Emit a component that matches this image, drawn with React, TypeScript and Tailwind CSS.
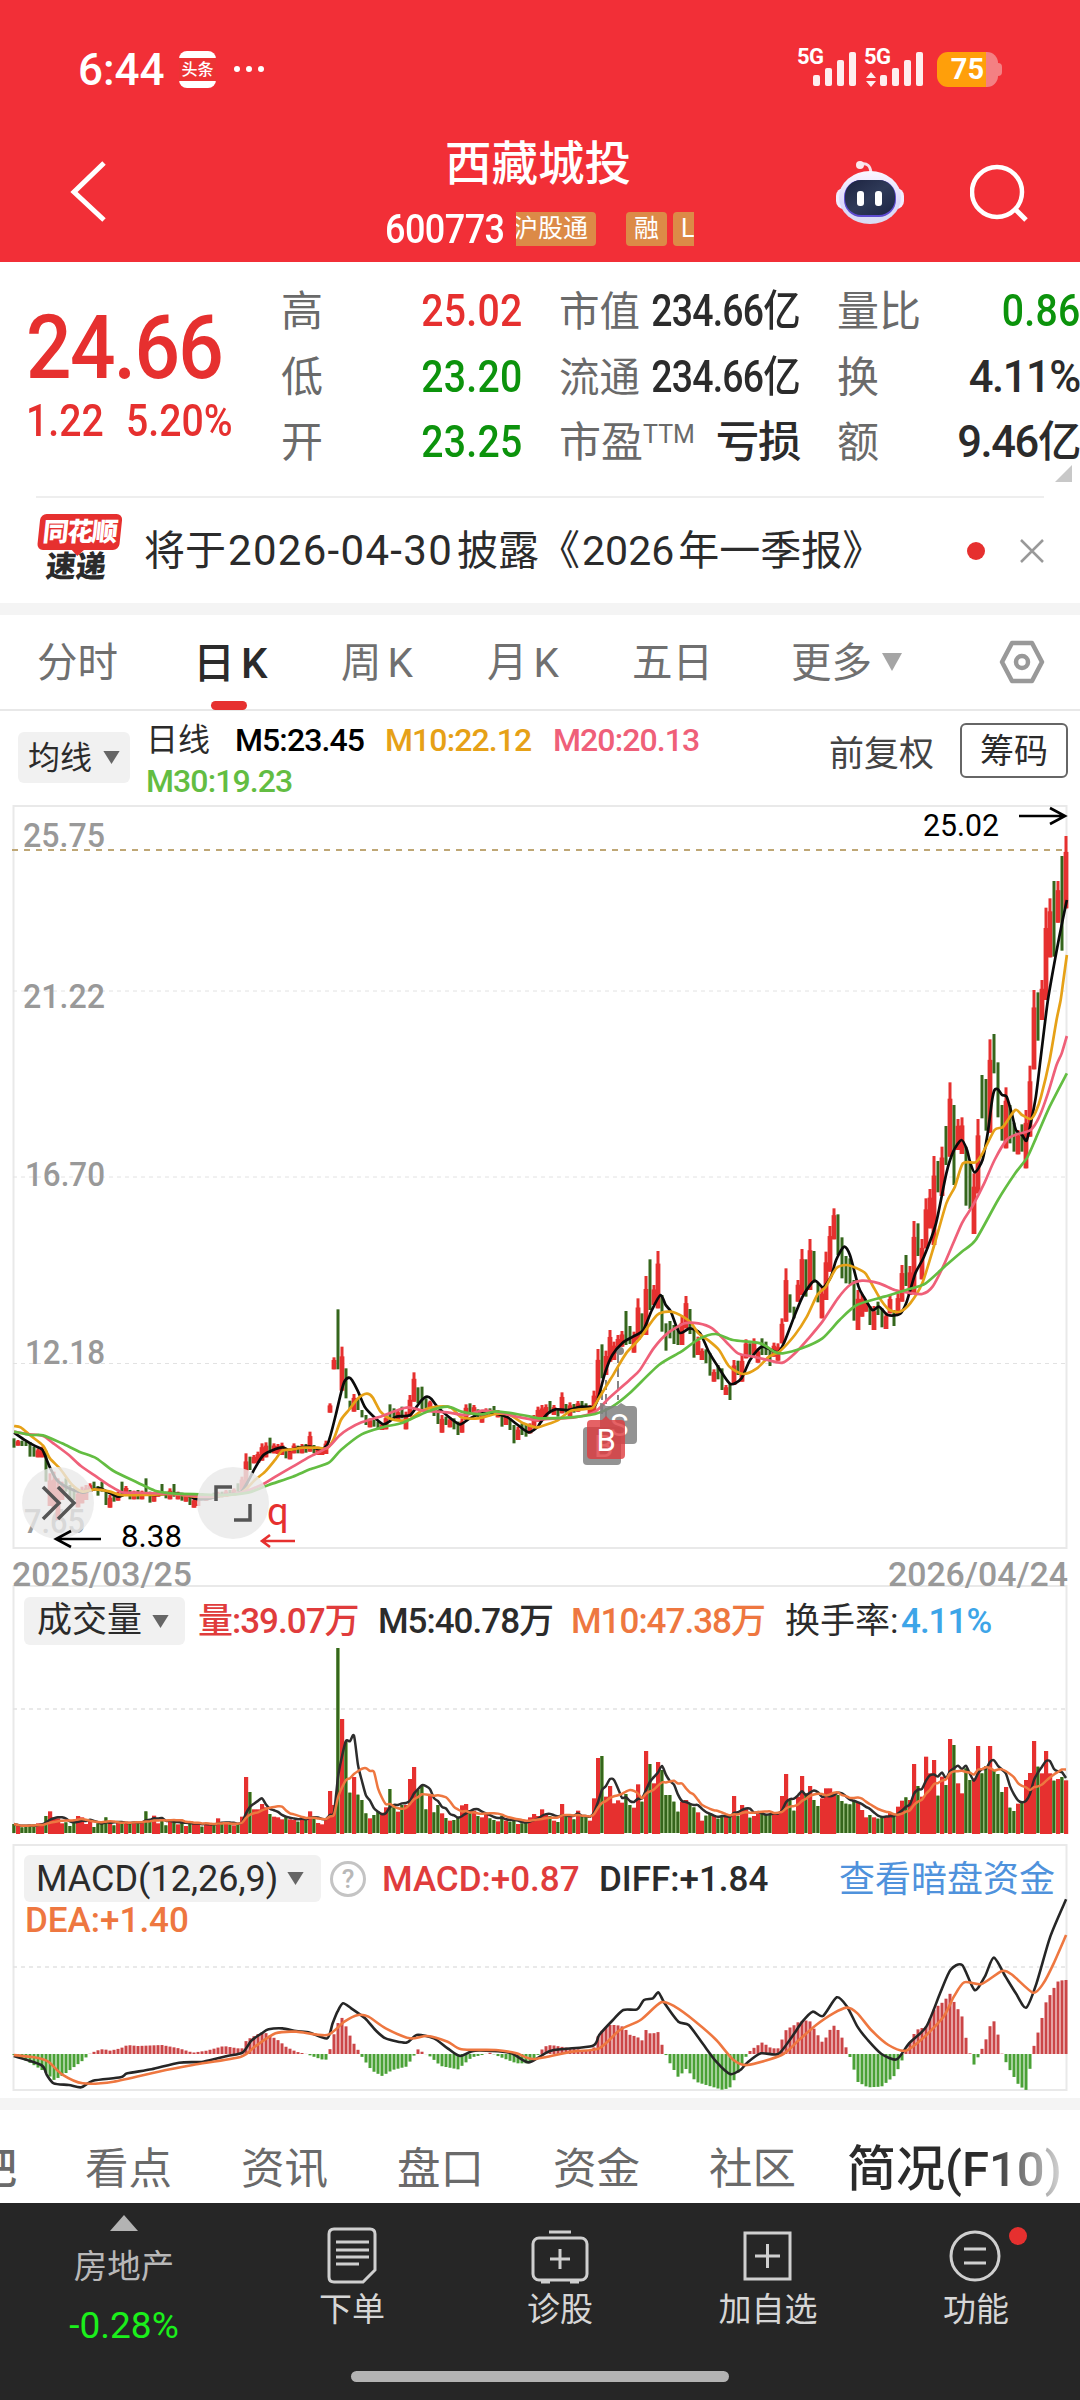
import type { ReactNode } from 'react';

const RED = '#e6302f';
const GREEN = '#35661c';
const GREEN_SOFT = '#8fb573';

// one letter per trading day: r = up, g = down
const directions = [
  'grggggrrgrrrrgggrrrrggggrgrgrgrgr',
  'ggrrggrgrgrgrrgrrgrgrgrgrrgrrrrgr',
  'rrgrrgrgrgrrrrrgrggrgggrggrrggrgr',
  'rrgggrggrgrggrrgrgrrggrgrggrggrrr',
  'rrgrgrgrgrggrrrgrrrrrggrrgrgrrggg',
  'ggrrggrrggrggrgrgrrgrrgggrrrrggrr',
  'grggrrrrgggggrrrgrggrrgrrgrrgrrrr',
  'grgrgrrggrrggrgggrggrgrrrgrrrgrgr',
].join('');

const volumeTops = [
  552, 558, 562, 556, 556, 554, 550, 550, 528, 514, 532, 535, 550, 547, 558, 545, 528, 532, 552, 540, 561, 550,
  552, 532, 545, 556, 545, 552, 545, 548, 548, 545, 548, 514, 540, 527, 550, 540, 556, 540, 542, 553, 548, 558,
  545, 550, 550, 560, 555, 550, 553, 535, 548, 550, 553, 556, 550, 530, 411, 456, 508, 508, 492, 502, 522, 530,
  532, 538, 528, 538, 540, 545, 532, 533, 514, 535, 549, 553, 535, 453, 495, 24, 237, 305, 458, 411, 464, 480,
  520, 535, 525, 515, 518, 502, 447, 492, 515, 495, 495, 417, 381, 450, 435, 508, 462, 517, 495, 520, 534, 542,
  540, 530, 496, 492, 510, 512, 528, 532, 520, 535, 540, 544, 527, 542, 545, 542, 552, 550, 546, 532, 522, 528,
  508, 522, 528, 542, 546, 492, 530, 530, 538, 512, 530, 530, 542, 475, 354, 348, 470, 438, 490, 481, 488, 462,
  495, 503, 433, 485, 333, 372, 430, 366, 390, 465, 465, 485, 515, 485, 480, 492, 502, 517, 542, 527, 520, 528,
  536, 530, 528, 530, 468, 528, 495, 505, 533, 528, 520, 515, 525, 525, 518, 520, 468, 402, 478, 512, 470, 408,
  460, 438, 480, 498, 475, 445, 445, 462, 465, 483, 491, 493, 480, 488, 510, 532, 525, 532, 536, 528, 528, 518,
  530, 500, 482, 472, 480, 372, 438, 470, 350, 400, 360, 467, 410, 435, 297, 315, 430, 460, 385, 420, 415, 318,
  400, 378, 318, 390, 402, 456, 441, 503, 513, 491, 485, 420, 399, 303, 380, 400, 333, 400, 422, 417, 411, 421,
];

// high / low pairs, in thirds of a pixel from the base of each stretch
const stretches: { base: number; pairs: number[] }[] = [
  {
    base: 1180,
    pairs: [
      775, 803, 780, 797, 782, 798, 785, 798, 786, 830, 800, 830, 805, 832, 800, 832, 812, 905, 880, 978, 875, 985,
      895, 1020, 905, 960, 895, 935, 915, 955, 925, 960, 930, 982, 920, 970, 915, 960, 910, 935, 905, 930, 918, 947,
      905, 935, 935, 975, 945, 983, 940, 965, 935, 962, 905, 950, 918, 945, 930, 958, 932, 958, 930, 958, 932, 958,
      895, 948, 935, 968, 938, 965, 932, 950, 912, 945, 935, 955, 925, 958, 912, 950, 935, 958, 938, 962, 940, 965,
      945, 975, 955, 983, 950, 978, 940, 960, 945, 962, 942, 958, 938, 955, 935, 952, 935, 952, 930, 950, 930, 948,
      925, 945, 910, 935, 890, 930, 820, 930, 830, 870, 825, 850, 815, 848, 790, 842, 787, 832, 773, 820, 790, 820,
      792, 822, 788, 825, 805, 835, 805, 838, 790, 820, 797, 820, 792, 820, 792, 818, 755, 815, 795, 820, 800, 825,
      805, 825, 782, 822, 670, 698, 532, 568, 388, 568, 500, 632, 565, 655, 662, 688, 642, 695, 655, 690, 690, 712,
      705, 735, 715, 742, 720, 740, 725, 748, 730, 750, 705, 748, 673, 720, 685, 712, 690, 720, 680, 715, 695, 748,
      645, 710, 577, 665, 622, 670, 620, 690, 655, 685, 662, 685, 680, 708, 690, 732, 705, 758, 710, 735, 712, 742,
      715, 748, 725, 765, 715, 758, 673, 720, 670, 700, 675, 705, 688, 712, 690, 728, 685, 708, 685, 705, 678, 705,
      690, 712, 705, 740, 700, 735, 715, 750, 735, 790, 740, 780, 730, 765, 735, 770, 730, 760, 705, 745, 680, 725,
    ],
  },
  {
    base: 1000,
    pairs: [
      1215, 1262, 1213, 1250, 1203, 1240, 1215, 1245, 1225, 1250, 1177, 1240, 1212, 1238, 1207, 1248, 1212, 1238,
      1203, 1235, 1203, 1230, 1210, 1228, 1215, 1240, 1172, 1240, 1047, 1195, 1033, 1135, 1052, 1125, 990, 1085,
      1025, 1080, 1005, 1060, 993, 1040, 933, 1035, 978, 1032, 995, 1058, 895, 1020, 940, 1005, 828, 1005, 778, 930,
      855, 915, 753, 925, 885, 995, 970, 1052, 963, 1015, 975, 1032, 980, 1035, 950, 1035, 888, 985, 927, 1002,
      985, 1073, 1010, 1065, 1045, 1080, 1048, 1090, 1060, 1127, 1108, 1145, 1095, 1138, 1105, 1170, 1155, 1185,
      1150, 1200, 1080, 1155, 1082, 1125, 1065, 1145, 1018, 1075, 1030, 1065, 1015, 1062, 1045, 1088, 1015, 1065,
      1025, 1065, 1050, 1098, 1028, 1070, 1030, 1082, 955, 1030, 805, 965, 883, 938, 920, 955, 840, 905, 747, 885,
      778, 890, 717, 870, 753, 848, 850, 907, 860, 955, 755, 900, 678, 815, 625, 718, 643, 765, 712, 835, 768, 850,
      775, 852, 840, 962, 870, 990, 882, 950, 900, 935, 918, 975, 918, 990, 905, 945, 925, 982, 938, 987, 885, 940,
      930, 978, 880, 945, 795, 905, 765, 858, 798, 885, 663, 880, 670, 768, 717, 838, 595, 745, 567, 685, 468, 735,
      483, 577, 440, 588, 378, 495, 247, 470, 315, 555, 357, 450, 352, 462, 440, 617, 485, 627, 520, 702, 357, 580,
      225, 355, 237, 392, 118, 398, 102, 220, 187, 352, 315, 422, 262, 445, 315, 430, 368, 455, 390, 463, 373, 455,
      330, 505, 197, 410,
    ],
  },
  { base: 800, pairs: [570, 808, 577, 722, 540, 660, 323, 600, 295, 472, 243, 470, 243, 368, 168, 452, 108, 325] },
];

const candles = stretches
  .flatMap(({ base, pairs }) => {
    const out: { high: number; low: number }[] = [];
    for (let i = 0; i < pairs.length; i += 2) out.push({ high: base + pairs[i] / 3, low: base + pairs[i + 1] / 3 });
    return out;
  })
  .map((c, i) => ({ ...c, x: 14 + i * 4, up: directions[i] !== 'g' }));

type Trace = { color: string; first: string; second: string };

const averages: Trace[] = [
  {
    color: '#0b0b0b',
    first:
      '41,758 75,782 100,797 122,808 130,825 145,862 165,900 200,925 240,938 260,932 290,925 320,940 345,950 370,940 420,943 450,945 500,940 540,945 570,957 600,957 650,945 690,940 705,930 725,895 740,865 765,825 800,807 822,802 840,810 870,803 900,800 930,808 950,795 960,765 975,705 990,640 1000,605 1013,593 1022,600 1040,635 1060,682 1090,715 1113,733 1130,725 1150,710 1190,706 1210,680 1225,660 1240,650 1253,657 1270,680 1300,708 1335,733 1360,718 1390,703 1420,698 1450,703 1475,712 1500,732 1535,757 1560,742',
    second:
      '0,1270 20,1243 45,1228 80,1230 120,1220 157,1220 170,1190 190,1115 210,1065 240,1028 270,1010 300,990 325,930 350,885 365,915 380,935 405,998 435,985 465,1000 490,1055 520,1105 553,1152 585,1135 610,1080 645,1040 690,1057 710,1025 740,945 765,885 797,842 822,862 845,830 860,780 883,740 900,765 925,860 940,890 965,930 985,920 1010,945 1045,942 1065,905 1090,820 1115,770 1150,670 1180,520 1200,455 1224,420 1240,450 1250,490 1263,517 1285,480 1300,400 1313,300 1320,270 1330,268 1342,285 1355,290 1370,340 1382,390 1400,405 1413,422 1425,370 1440,290 1455,165 1465,80 1475,0 1490,-90 1508,-190 1530,-300',
  },
  {
    color: '#e6a117',
    first:
      '41,738 60,742 90,768 125,797 145,835 175,867 210,915 240,935 275,928 320,935 350,945 420,945 500,942 570,950 620,950 700,938 740,900 770,875 800,838 820,812 850,808 880,803 920,803 950,805 970,775 990,720 1013,690 1040,655 1065,641 1082,652 1105,695 1130,715 1165,722 1190,718 1225,692 1270,680 1310,683 1340,712 1390,715 1440,702 1480,705 1520,730 1555,742',
    second:
      '0,1280 50,1262 90,1232 150,1225 165,1205 215,1120 250,1060 290,1015 340,945 380,935 415,950 440,970 460,1000 490,1022 520,1050 550,1100 590,1122 630,1105 665,1070 695,1055 740,1005 775,950 805,885 830,860 860,805 890,795 920,805 945,820 965,855 990,900 1015,930 1045,935 1075,910 1110,850 1145,735 1180,610 1205,560 1228,490 1265,487 1285,460 1320,390 1345,380 1380,330 1400,345 1425,357 1440,335 1455,290 1480,180 1500,60 1512,0 1520,-60 1530,-135',
  },
  {
    color: '#ef6079',
    first:
      '41,755 80,762 125,768 155,790 200,825 235,858 280,890 320,918 355,937 400,938 500,942 600,950 700,938 765,912 800,890 850,860 900,830 955,800 985,767 1010,748 1050,727 1110,708 1150,692 1185,682 1230,692 1300,697 1350,705 1400,692 1450,697 1500,710 1560,721',
    second:
      '0,1258 100,1252 160,1235 200,1195 260,1140 290,1110 330,1045 370,1000 420,970 460,970 500,985 540,1025 575,1060 620,1070 660,1080 705,1088 745,1055 780,1015 820,965 865,895 900,855 935,842 985,850 1030,870 1070,878 1110,882 1140,860 1175,790 1225,670 1255,620 1290,550 1320,480 1355,420 1385,403 1425,390 1450,350 1475,280 1500,195 1515,160 1530,108',
  },
  {
    color: '#63bd42',
    first:
      '41,755 90,765 125,766 180,790 230,815 280,835 330,873 400,908 450,932 500,940 580,943 650,945 720,938 780,915 850,890 900,868 955,848 990,810 1050,763 1110,742 1170,728 1240,695 1300,680 1340,695 1400,703 1440,694 1500,702 1560,714',
    second:
      '0,1255 80,1253 160,1242 210,1220 260,1180 345,1095 410,1055 460,1018 510,1002 560,1020 640,1030 680,1055 705,1060 760,1045 820,1015 870,960 920,915 1000,890 1070,868 1120,850 1180,795 1225,755 1265,720 1330,600 1380,520 1415,472 1440,415 1480,320 1530,220',
  },
];

const macdBars =
  '22,675 45,700 65,725 78,750 90,738 105,715 120,692 130,672 140,662 150,657 160,662 175,655 185,645 200,648 235,645 260,655 280,668 300,662 325,648 345,655 352,655 358,630 375,612 385,608 395,620 405,632 415,650 430,665 445,672 458,682 470,690 476,688 482,630 492,572 497,563 503,592 512,635 520,660 526,682 540,722 555,738 570,720 590,710 597,690 607,658 615,668 625,680 640,708 665,718 675,700 685,682 700,675 712,668 725,680 750,700 765,700 780,678 790,650 800,645 820,652 840,658 855,665 862,655 868,620 875,600 885,585 895,585 905,590 915,615 925,620 932,632 938,600 945,612 956,606 962,650 970,690 985,742 997,715 1010,755 1030,768 1050,780 1060,772 1070,735 1080,690 1090,660 1107,637 1120,655 1130,655 1142,597 1150,590 1160,575 1175,570 1183,600 1195,640 1205,600 1212,585 1220,610 1230,660 1236,690 1245,755 1260,772 1280,770 1300,735 1310,690 1318,650 1330,600 1345,590 1357,535 1370,515 1380,490 1385,515 1397,560 1405,650 1415,708 1422,672 1430,640 1437,590 1443,572 1450,620 1455,672 1465,715 1480,768 1490,780 1497,700 1502,640 1510,590 1518,520 1530,475 1537,452 1548,450';
const diffLine =
  '20,678 60,705 68,735 78,760 100,765 118,772 135,752 175,742 185,730 220,718 260,698 295,695 330,678 352,668 365,632 380,610 390,598 410,595 430,603 450,608 475,625 483,580 490,545 498,520 510,535 530,565 545,600 560,625 590,638 605,615 630,625 650,655 668,678 690,662 740,668 768,697 800,662 860,648 870,615 890,570 905,540 925,538 935,510 948,505 956,487 965,520 985,575 1000,585 1020,640 1040,695 1060,732 1075,720 1085,698 1105,670 1130,672 1150,620 1165,575 1180,545 1195,558 1215,502 1230,530 1245,590 1260,630 1280,672 1302,688 1320,640 1345,590 1365,490 1380,420 1397,405 1415,480 1430,440 1443,383 1460,440 1475,490 1490,533 1505,460 1525,320 1548,208';
const deaLine =
  '20,675 50,682 70,695 90,733 120,760 165,755 230,725 280,705 350,680 370,650 400,610 430,605 475,615 500,575 520,555 535,560 560,595 595,625 620,618 650,635 670,658 720,660 750,670 775,687 830,665 870,655 900,600 930,570 960,517 980,530 1010,575 1040,630 1065,690 1085,705 1135,675 1160,630 1185,585 1210,550 1230,533 1245,550 1265,600 1290,645 1315,662 1340,625 1370,560 1385,500 1400,457 1425,462 1455,423 1470,435 1500,488 1515,460 1530,400 1548,315';

type Point = [number, number];

function project(src: string, scaleX: number, left: number, top: number): Point[] {
  return src.split(' ').map((p) => {
    const [x, y] = p.split(',').map(Number);
    return [left + x / scaleX, top + y / 3];
  });
}

// Catmull-Rom through the points, written as cubic segments
function curve(pts: Point[]) {
  let d = `M${pts[0][0]} ${pts[0][1]}`;
  for (let i = 0; i < pts.length - 1; i++) {
    const a = pts[i - 1] ?? pts[i];
    const b = pts[i];
    const c = pts[i + 1];
    const e = pts[i + 2] ?? c;
    d += `C${b[0] + (c[0] - a[0]) / 8} ${b[1] + (c[1] - a[1]) / 8} ${c[0] - (e[0] - b[0]) / 8} ${c[1] - (e[1] - b[1]) / 8} ${c[0]} ${c[1]}`;
  }
  return d;
}

function valueAt(pts: Point[], x: number) {
  const i = pts.findIndex((p) => p[0] >= x);
  if (i < 0) return pts[pts.length - 1][1];
  if (i === 0) return pts[0][1];
  const [x0, y0] = pts[i - 1];
  const [x1, y1] = pts[i];
  return y0 + ((y1 - y0) * (x - x0)) / (x1 - x0);
}

function volumeAverage(n: number): Point[] {
  return volumeTops.map((_, i) => {
    const win = volumeTops.slice(Math.max(0, i - n + 1), i + 1);
    return [14 + i * 4, 1640 + win.reduce((s, v) => s + v, 0) / win.length / 3];
  });
}

function AxisLabel({ x, y, w, children }: { x: number; y: number; w: number; children: string }) {
  return (
    <text x={x} y={y} textLength={w} lengthAdjust="spacingAndGlyphs" fontSize="34" fontWeight="500" fill="#999">{children}</text>
  );
}

function PriceChart() {
  return (
    <svg className="relative z-10 block overflow-visible" width="1080" height="780" viewBox="0 804 1080 780">
      <path d="M13.5 1548V806H1066.5V1548Z" fill="none" stroke="#e9e9e9" strokeWidth="2" />
      {[991, 1177, 1363.5].map((y) => (
        <path key={y} d={`M13 ${y}H1066`} stroke="#e2e2e2" strokeDasharray="4 4" />
      ))}
      <path d="M12 850H1066" stroke="#bfa775" strokeWidth="2" strokeDasharray="6 6" />
      <AxisLabel x={23} y={847} w={82}>25.75</AxisLabel>
      <AxisLabel x={23} y={1008} w={82}>21.22</AxisLabel>
      <AxisLabel x={25} y={1186} w={80}>16.70</AxisLabel>
      <AxisLabel x={25} y={1364} w={80}>12.18</AxisLabel>
      <AxisLabel x={24} y={1533} w={61}>7.65</AxisLabel>

      {candles.map((c, i) => {
        const wick = (c.low - c.high) * 0.22;
        return (
          <g key={i}>
            <rect x={c.x - 1.5} y={c.high} width="3" height={c.low - c.high} fill={c.up ? RED : GREEN} />
            {c.up && <rect x={c.x - 2.4} y={c.high + wick} width="4.8" height={c.low - c.high - wick} fill={RED} />}
          </g>
        );
      })}
      <path d="M618 1353V1400M602 1390V1418M606 1380V1418" stroke="#444" strokeWidth="1.3" strokeDasharray="10 4" />
      <circle cx="620" cy="1351" r="4" fill="#888" />
      {averages.map((a) => (
        <path
          key={a.color}
          d={curve([...project(a.first, 2.904, 0, 1180), ...project(a.second, 2.904, 540, 1000)])}
          fill="none"
          stroke={a.color}
          strokeWidth="2.7"
          strokeLinejoin="round"
        />
      ))}

      <text x="923" y="836" textLength="76" lengthAdjust="spacingAndGlyphs" fontSize="31" fill="#000">25.02</text>
      <path d="M1019 816H1065M1050 808L1065 816L1050 824" fill="none" stroke="#000" strokeWidth="2.6" />

      {/* trade markers, the newest buy lies over the older ones */}
      <path d="M600 1411V1403H602L606 1406H617L621 1403L626 1406H633Q637 1406 637 1410V1440Q637 1444 633 1444H604Q600 1444 600 1440Z" fill="#808080" fillOpacity=".85" />
      <rect x="583" y="1427" width="38" height="38" rx="4" fill="#808080" fillOpacity=".85" />
      <text x="610" y="1436" fontSize="31" fill="#fff">S</text>
      <text x="594" y="1457" fontSize="31" fill="#fff">B</text>
      <path d="M602 1420L606 1416L610 1420H621Q625 1420 625 1424V1455Q625 1459 621 1459H591Q587 1459 587 1455V1424Q587 1420 591 1420Z" fill="#de3b3f" fillOpacity=".8" />
      <text x="596.5" y="1451" fontSize="31" fill="#fff">B</text>

      <circle cx="58" cy="1503" r="36" fill="#e9e9e9" fillOpacity=".78" />
      <path d="M43 1487L59 1503L43 1519M58 1487L74 1503L58 1519" fill="none" stroke="#555" strokeWidth="3.5" />
      <path d="M101 1539H56M71 1531L56 1539L71 1547" fill="none" stroke="#000" strokeWidth="2.6" />
      <text x="121" y="1547" textLength="61" lengthAdjust="spacingAndGlyphs" fontSize="31" fill="#000">8.38</text>
      <circle cx="233" cy="1503" r="36" fill="#e9e9e9" fillOpacity=".82" />
      <path d="M216 1501V1487H232M234 1520H250V1504" fill="none" stroke="#555" strokeWidth="3.5" />
      <text x="267" y="1525" fontSize="38" fill={RED}>q</text>
      <path d="M295 1541H262M270 1535L262 1541L270 1547" fill="none" stroke={RED} strokeWidth="2.6" />

      <AxisLabel x={12} y={1586} w={180}>2025/03/25</AxisLabel>
      <AxisLabel x={888} y={1586} w={180}>2026/04/24</AxisLabel>
    </svg>
  );
}

function VolumeChart() {
  return (
    <svg className="absolute inset-0" width="1080" height="260" viewBox="0 1584 1080 260">
      <path d="M13.5 1834V1586H1066.5V1834" fill="none" stroke="#e9e9e9" strokeWidth="2" />
      <path d="M13 1709H1066" stroke="#e2e2e2" strokeWidth="1.5" strokeDasharray="4 4" />
      {volumeTops.map((t, i) => {
        const x = 14 + i * 4;
        const y = 1640 + t / 3;
        return directions[i] === 'g' ? (
          <g key={i}>
            <rect x={x - 2} y={y} width="4" height={1833 - y} fill={GREEN_SOFT} />
            <rect x={x - 1.5} y={y} width="2.5" height={1833 - y} fill={GREEN} />
          </g>
        ) : (
          <rect key={i} x={x - 2} y={y} width="4.2" height={1834 - y} fill={RED} />
        );
      })}
      <path d={curve(volumeAverage(5))} fill="none" stroke="#2d2d2d" strokeWidth="2.5" />
      <path d={curve(volumeAverage(10))} fill="none" stroke="#ee7740" strokeWidth="2.5" />
    </svg>
  );
}

function MacdChart() {
  const bars = project(macdBars, 1.452, 0, 1830);
  return (
    <svg className="absolute inset-0" width="1080" height="254" viewBox="0 1844 1080 254">
      <rect x="13.5" y="1845" width="1053" height="245" fill="none" stroke="#e9e9e9" strokeWidth="2" />
      <path d="M13 1967H1066" stroke="#e2e2e2" strokeWidth="1.5" strokeDasharray="4 4" />
      {volumeTops.map((_, i) => {
        const x = 14 + i * 4;
        const y = valueAt(bars, x);
        return y < 2054 ? (
          <rect key={i} x={x - 1.5} y={y} width="3" height={2054 - y} fill="#cb4547" />
        ) : (
          <rect key={i} x={x - 1.5} y="2054" width="3" height={y - 2054} fill="#4aa136" />
        );
      })}
      <path d={curve(project(diffLine, 1.452, 0, 1830))} fill="none" stroke="#262626" strokeWidth="2.6" />
      <path d={curve(project(deaLine, 1.452, 0, 1830))} fill="none" stroke="#ee7740" strokeWidth="2.6" />
    </svg>
  );
}

function SignalBars({ arrows }: { arrows?: boolean }) {
  return (
    <div className="relative h-10 w-[67px]">
      <span className="absolute top-0 left-0 text-[22px] leading-[20px] font-bold tracking-[-0.5px]">5G</span>
      <svg className="absolute inset-0" width="67" height="40" viewBox="0 0 67 40">
        <g fill="#fff" fillOpacity=".92">
          <rect x="16" y="28" width="7" height="11" rx="2" />
          <rect x="28" y="21" width="7" height="18" rx="2" />
          <rect x="40" y="13" width="7" height="26" rx="2" />
          <rect x="52" y="5" width="7" height="34" rx="2" />
          {arrows && <path d="M2 31L7 25L12 31ZM2 34L7 40L12 34Z" />}
        </g>
      </svg>
    </div>
  );
}

function StatusBar() {
  return (
    <div className="flex h-[139px] items-start px-[78px] pt-[47px] text-white">
      <span className="w-[101px] pt-px text-[44px] leading-[45px] font-medium">6:44</span>
      <span className="mt-1 flex h-[37px] w-[37px] flex-col justify-center rounded-lg bg-white">
        <span className="bg-[#ec3334] text-center text-[16px] leading-[23px] font-medium">头条</span>
      </span>
      <svg className="mt-[18px] ml-[17px]" width="32" height="8" viewBox="0 0 32 8" fill="#fff">
        <circle cx="4" cy="4" r="3" /><circle cx="16" cy="4" r="3" /><circle cx="28" cy="4" r="3" />
      </svg>
      <div className="ml-auto flex">
        <SignalBars />
        <SignalBars arrows />
        <div className="mt-[5px] ml-[6px] flex">
          <div className="flex h-[35px] w-[61px] items-center justify-center rounded-[11px] bg-linear-to-r from-[#ff9f0a] from-80% to-[#f48083] to-80% text-[29px] font-bold">75</div>
          <div className="mt-[11px] h-[13px] w-1 rounded-r bg-[#f48083]" />
        </div>
      </div>
    </div>
  );
}

function Robot() {
  return (
    <svg width="70" height="66" viewBox="0 0 70 66">
      <defs>
        <linearGradient id="shell" x1="0" y1="0" x2="0" y2="1">
          <stop offset="0" stopColor="#fbf6ff" /><stop offset=".6" stopColor="#dcd8fb" /><stop offset="1" stopColor="#d9dcf2" />
        </linearGradient>
        <linearGradient id="face" x1="0" y1="0" x2="1" y2="1">
          <stop offset="0" stopColor="#1c2340" /><stop offset=".5" stopColor="#2f3a58" /><stop offset="1" stopColor="#1c2444" />
        </linearGradient>
      </defs>
      <path d="M26 5Q35 3 36 14" fill="none" stroke="#f7dfe8" strokeWidth="3" />
      <circle cx="25" cy="6" r="4" fill="#fbe9ee" />
      <rect x="1" y="29" width="68" height="21" rx="8" fill="#f2edfd" />
      <ellipse cx="35" cy="38.5" rx="31" ry="26.5" fill="url(#shell)" />
      <rect x="9" y="21" width="52" height="37" rx="17" fill="#5d4bd0" />
      <rect x="10" y="21" width="50" height="35" rx="16" fill="url(#face)" />
      <rect x="22" y="32" width="7" height="15" rx="3" fill="#fff" />
      <rect x="40" y="32" width="7" height="15" rx="3" fill="#fff" />
    </svg>
  );
}

function TitleBar() {
  return (
    <div className="flex h-[123px] text-white">
      <svg className="mt-[21px] ml-[68px]" width="40" height="64" viewBox="0 0 40 64" fill="none" stroke="#fff" strokeWidth="5">
        <path d="M36 3L6 32L36 60" />
      </svg>
      <div className="ml-[277px] w-[320px]">
        <h1 className="ml-[60px] text-[46.5px] leading-[50px] font-medium">西藏城投</h1>
        <div className="mt-[21px] flex h-[38px] items-center">
          <span className="w-[131px] shrink-0">
            <span className="inline-block origin-left scale-x-90 pt-0.5 text-[40px] leading-none font-medium tracking-[-0.6px]">600773</span>
          </span>
          <span className="flex h-[34px] w-20 justify-end overflow-hidden rounded-r bg-[#dc8a47] pr-2 text-[25px] leading-[33px] whitespace-nowrap">沪股通</span>
          <span className="ml-[30px] h-[34px] w-[41px] rounded bg-[#dc8a47] text-center text-[25px] leading-[33px]">融</span>
          <span className="ml-1.5 h-[34px] w-[21px] overflow-hidden rounded-l bg-[#dc8a47] pl-2 text-[25px] leading-[33px]">L</span>
        </div>
      </div>
      <div className="mt-5 ml-[130px]"><Robot /></div>
      <svg className="mt-6 ml-[65px]" width="60" height="62" viewBox="0 0 60 62" fill="none" stroke="#fff" strokeWidth="4.5">
        <circle cx="27" cy="29" r="25" />
        <path d="M45 46L56 57" strokeWidth="5" />
      </svg>
    </div>
  );
}

function Stat({ label, value, tone = 'text-[#2b2b2b] tracking-[-1.4px]' }: { label: ReactNode; value: ReactNode; tone?: string }) {
  return (
    <div className="flex h-[65.5px] items-center justify-between whitespace-nowrap">
      <span className="text-[42px] text-[#6a6a6a]">{label}</span>
      <span className={`text-[43.5px] font-medium ${tone}`}>{value}</span>
    </div>
  );
}

const UP = 'text-[#e6302f] origin-right scale-x-90 tracking-[0.3px]';
const DOWN = 'text-[#0c930c] origin-right scale-x-90 tracking-[0.3px]';
const CAP = 'text-[#2b2b2b] origin-right scale-x-[.86] tracking-[-0.9px]';

function Quote() {
  return (
    <section className="relative flex h-[234px] pt-[17px]">
      <div className="w-[281px] pl-[26px] font-medium text-[#e6302f]">
        <div className="mt-[20px] origin-left scale-x-90 text-[89px] leading-[98px] tracking-[-1.8px]">24.66</div>
        <div className="flex text-[43.5px] leading-[50px]">
          <span className="w-[100px] origin-left scale-x-90">1.22</span>
          <span className="origin-left scale-x-90">5.20%</span>
        </div>
      </div>
      <div className="w-[241px]">
        <Stat label="高" value="25.02" tone={UP} />
        <Stat label="低" value="23.20" tone={DOWN} />
        <Stat label="开" value="23.25" tone={DOWN} />
      </div>
      <div className="ml-[37px] flex w-[241px] flex-col">
        <Stat label={<span className="inline-block w-[60px] text-[40.5px]">市值</span>} value="234.66亿" tone={CAP} />
        <Stat label={<span className="inline-block w-[60px] text-[40.5px]">流通</span>} value="234.66亿" tone={CAP} />
        <Stat label={<>市盈<sup className="top-[-14px] text-[25px]">TTM</sup></>} value="亏损" />
      </div>
      <div className="ml-[37px] w-[243px]">
        <Stat label="量比" value="0.86" tone={DOWN} />
        <Stat label="换" value="4.11%" />
        <Stat label="额" value="9.46亿" />
      </div>
      <svg className="absolute top-[203px] left-[1055px]" width="17" height="17" viewBox="0 0 17 17"><path d="M17 0V17H0Z" fill="#c8c8c8" /></svg>
    </section>
  );
}

function NewsRow() {
  return (
    <section className="mx-9 flex h-[107px] items-center border-t-2 border-[#eee]">
      <div className="-mt-1 ml-px w-[82px] shrink-0 -skew-x-6 text-center font-black">
        <div className="relative rounded-md bg-[#e6302f] text-[26px] leading-[36px] tracking-[-1.5px] text-white">
          同花顺
          <span className="absolute bottom-[-4px] left-9 h-2.5 w-2.5 rotate-45 bg-[#e6302f]" />
        </div>
        <div className="text-[30px] leading-[34px] text-[#2b2b2b]">速递</div>
      </div>
      <div className="ml-[25px] w-[823px] shrink-0 text-[41px] whitespace-nowrap text-[#2b2b2b]">
        将于<span className="mr-1 ml-0.5 text-[42px] tracking-[1.3px]">2026-04-30</span>披露《<span className="mr-1 ml-0.5">2026</span>年一季报》
      </div>
      <span className="h-[18px] w-[18px] shrink-0 rounded-full bg-[#e6302f]" />
      <svg className="ml-[34px] shrink-0" width="26" height="26" viewBox="0 0 26 26" stroke="#999" strokeWidth="2.5"><path d="M2 2L24 24M24 2L2 24" /></svg>
    </section>
  );
}

function Caret() {
  return <svg width="17" height="13" viewBox="0 0 20 16"><path d="M0 0H20L10 16Z" fill="#666" /></svg>;
}

const periods = [
  { name: '分时', box: 'ml-[37px] w-[156px]' },
  { name: '日K', box: 'w-[148px] text-[42px] font-medium text-[#2b2b2b]' },
  { name: '周K', box: 'w-[146px]' },
  { name: '月K', box: 'w-[145px]' },
  { name: '五日', box: 'w-[159px]' },
  { name: '更多', box: 'w-[91px]' },
];

function PeriodTabs() {
  return (
    <nav className="relative flex h-24 items-center border-b-2 border-[#e8e8e8] text-[40.5px] text-[#707070]">
      {periods.map((p) => (
        <span key={p.name} className={`pt-0.5 whitespace-nowrap ${p.box}`}>
          {p.name.endsWith('K') ? <>{p.name[0]}<span className="ml-1.5">K</span></> : p.name}
        </span>
      ))}
      <svg width="20" height="18" viewBox="0 0 20 18"><path d="M0 0H20L10 18Z" fill="#a5a5a5" /></svg>
      <svg className="ml-[97px]" width="46" height="44" viewBox="0 0 46 44" fill="none" stroke="#999" strokeWidth="4.5">
        <path d="M13 3H33L43 22L33 41H13L3 22Z" strokeLinejoin="round" />
        <circle cx="23" cy="22" r="6" />
      </svg>
      <span className="absolute bottom-[-1px] left-[211px] h-[9px] w-9 rounded-full bg-[#e6302f]" />
    </nav>
  );
}

function AverageLegend() {
  return (
    <div className="flex h-[93px] text-[32px] font-medium whitespace-nowrap">
      <span className="mt-[21px] ml-[18px] flex h-[51px] w-[112px] items-center gap-[11px] rounded-md bg-[#f1f1f1] pl-[10px] text-[32px] font-normal text-[#2b2b2b]">均线<Caret /></span>
      <div className="ml-4 w-[683px] pt-[9px] leading-[41px] tracking-[-0.9px]">
        <div className="flex">
          <span className="w-[89px] font-normal tracking-normal text-[#2b2b2b]">日线</span>
          <span className="w-[150px] text-black">M5:23.45</span>
          <span className="w-[168px] text-[#e6a117]">M10:22.12</span>
          <span className="text-[#ef6079]">M20:20.13</span>
        </div>
        <div className="text-[#63bd42]">M30:19.23</div>
      </div>
      <span className="mt-5 w-[131px] text-[35px] leading-[48px] font-normal text-[#444]">前复权</span>
      <span className="mt-3 h-[55px] w-[108px] rounded-md border-2 border-[#666] text-center text-[34px] leading-[52px] font-normal text-[#2b2b2b]">筹码</span>
    </div>
  );
}

function VolumePanel() {
  return (
    <section className="relative h-[260px]">
      <VolumeChart />
      <div className="relative flex pt-[13px] text-[35px] leading-[50px] tracking-[-1px] whitespace-nowrap text-[#2b2b2b]">
        <span className="ml-6 flex h-12 w-[161px] items-center gap-[10px] rounded-md bg-[#f1f1f1] pl-[13px] tracking-normal">成交量<Caret /></span>
        <span className="ml-[13px] w-[180px] font-medium text-[#e03c3c]">量:39.07万</span>
        <span className="w-[193px] font-medium">M5:40.78万</span>
        <span className="w-[214px] font-medium text-[#ee7740]">M10:47.38万</span>
        <span className="w-[116px] tracking-normal">换手率:</span>
        <span className="font-medium text-[#3da5e8]">4.11%</span>
      </div>
    </section>
  );
}

function MacdPanel() {
  return (
    <section className="relative h-[254px]">
      <MacdChart />
      <div className="relative flex pt-[11px] text-[35px] leading-[50px] font-medium whitespace-nowrap text-[#2b2b2b]">
        <span className="ml-6 flex h-[47px] w-[297px] items-center gap-[9px] rounded-md bg-[#f1f1f1] pl-[12px] text-[36px] font-normal">MACD(12,26,9)<Caret /></span>
        <span className="mt-[6px] ml-[9px] h-9 w-9 rounded-full border-[3px] border-[#c4c4c4] text-center text-[26px] leading-[30px] text-[#b8b8b8]">?</span>
        <span className="ml-[16px] w-[217px] text-[#e03c3c]">MACD:+0.87</span>
        <span className="w-[240px]">DIFF:+1.84</span>
        <span className="text-[36px] font-normal text-[#4f92dc]">查看暗盘资金</span>
      </div>
      <div className="relative ml-[25px] text-[35px] leading-[32px] font-medium text-[#ee7740]">DEA:+1.40</div>
    </section>
  );
}

const infoTabs = ['看点', '资讯', '盘口', '资金', '社区'];

function InfoTabs() {
  return (
    <nav className="flex h-[93px] items-center overflow-hidden pt-[26px] text-[43.5px] whitespace-nowrap text-[#6a6a6a]">
      <span className="flex w-[17px] justify-end font-medium">吧</span>
      <span className="w-[68px]" />
      {infoTabs.map((t) => <span key={t} className="w-[156px] shrink-0">{t}</span>)}
      <span className="-ml-[18px] bg-linear-to-r from-[#2b2b2b] from-65% to-[#d8d8d8] bg-clip-text text-[49px] font-medium text-transparent">简况(F10)</span>
    </nav>
  );
}

function Action({ label, children }: { label: string; children: ReactNode }) {
  return (
    <div className="flex w-[208px] flex-col items-center pt-[22px]">
      <svg width="64" height="62" viewBox="0 0 64 62" fill="none" stroke="#cfcfcf" strokeWidth="3">{children}</svg>
      <span className="mt-px text-[33px] leading-[44px] text-[#d6d6d6]">{label}</span>
    </div>
  );
}

function Footer() {
  return (
    <footer className="relative flex h-[197px] bg-[#262626]">
      <div className="flex w-[248px] flex-col items-center pt-[12px]">
        <svg width="28" height="16" viewBox="0 0 28 16"><path d="M14 0L28 16H0Z" fill="#b3b3b3" /></svg>
        <span className="mt-[14px] text-[33.5px] leading-[44px] text-[#b8b8b8]">房地产</span>
        <span className="mt-[17px] text-[37px] leading-[40px] text-[#1bf01b]">-0.28%</span>
      </div>
      <Action label="下单">
        <path d="M14 4H50Q55 4 55 9V45L43 57H14Q9 57 9 52V9Q9 4 14 4Z" />
        <path d="M16 17H49M16 25H49M16 32H49M16 39H39" />
      </Action>
      <Action label="诊股">
        <rect x="5" y="13" width="54" height="42" rx="6" />
        <path d="M21 7H43M32 24V44M22 34H42M13 57H22M42 57H51" />
      </Action>
      <Action label="加自选">
        <rect x="9" y="8" width="45" height="46" />
        <path d="M31.5 19V43M19 31H44" />
      </Action>
      <Action label="功能">
        <circle cx="31" cy="31" r="24" />
        <path d="M20 24H42M20 38H42" />
      </Action>
      <span className="absolute top-[24px] left-[1009px] h-[18px] w-[18px] rounded-full bg-[#e6302f]" />
      <span className="absolute bottom-[18px] left-[351px] h-[11px] w-[378px] rounded-full bg-[#b3b3b3]" />
    </footer>
  );
}

export default function App() {
  return (
    <div className="w-[1080px] overflow-hidden bg-white font-[Roboto,'Noto_Sans_CJK_SC',sans-serif]">
      <header className="bg-[#f22f37]">
        <StatusBar />
        <TitleBar />
      </header>
      <Quote />
      <NewsRow />
      <div className="h-3 bg-[#f4f4f4]" />
      <PeriodTabs />
      <AverageLegend />
      <PriceChart />
      <VolumePanel />
      <MacdPanel />
      <div className="h-3 bg-[#f4f4f4]" />
      <InfoTabs />
      <Footer />
    </div>
  );
}
